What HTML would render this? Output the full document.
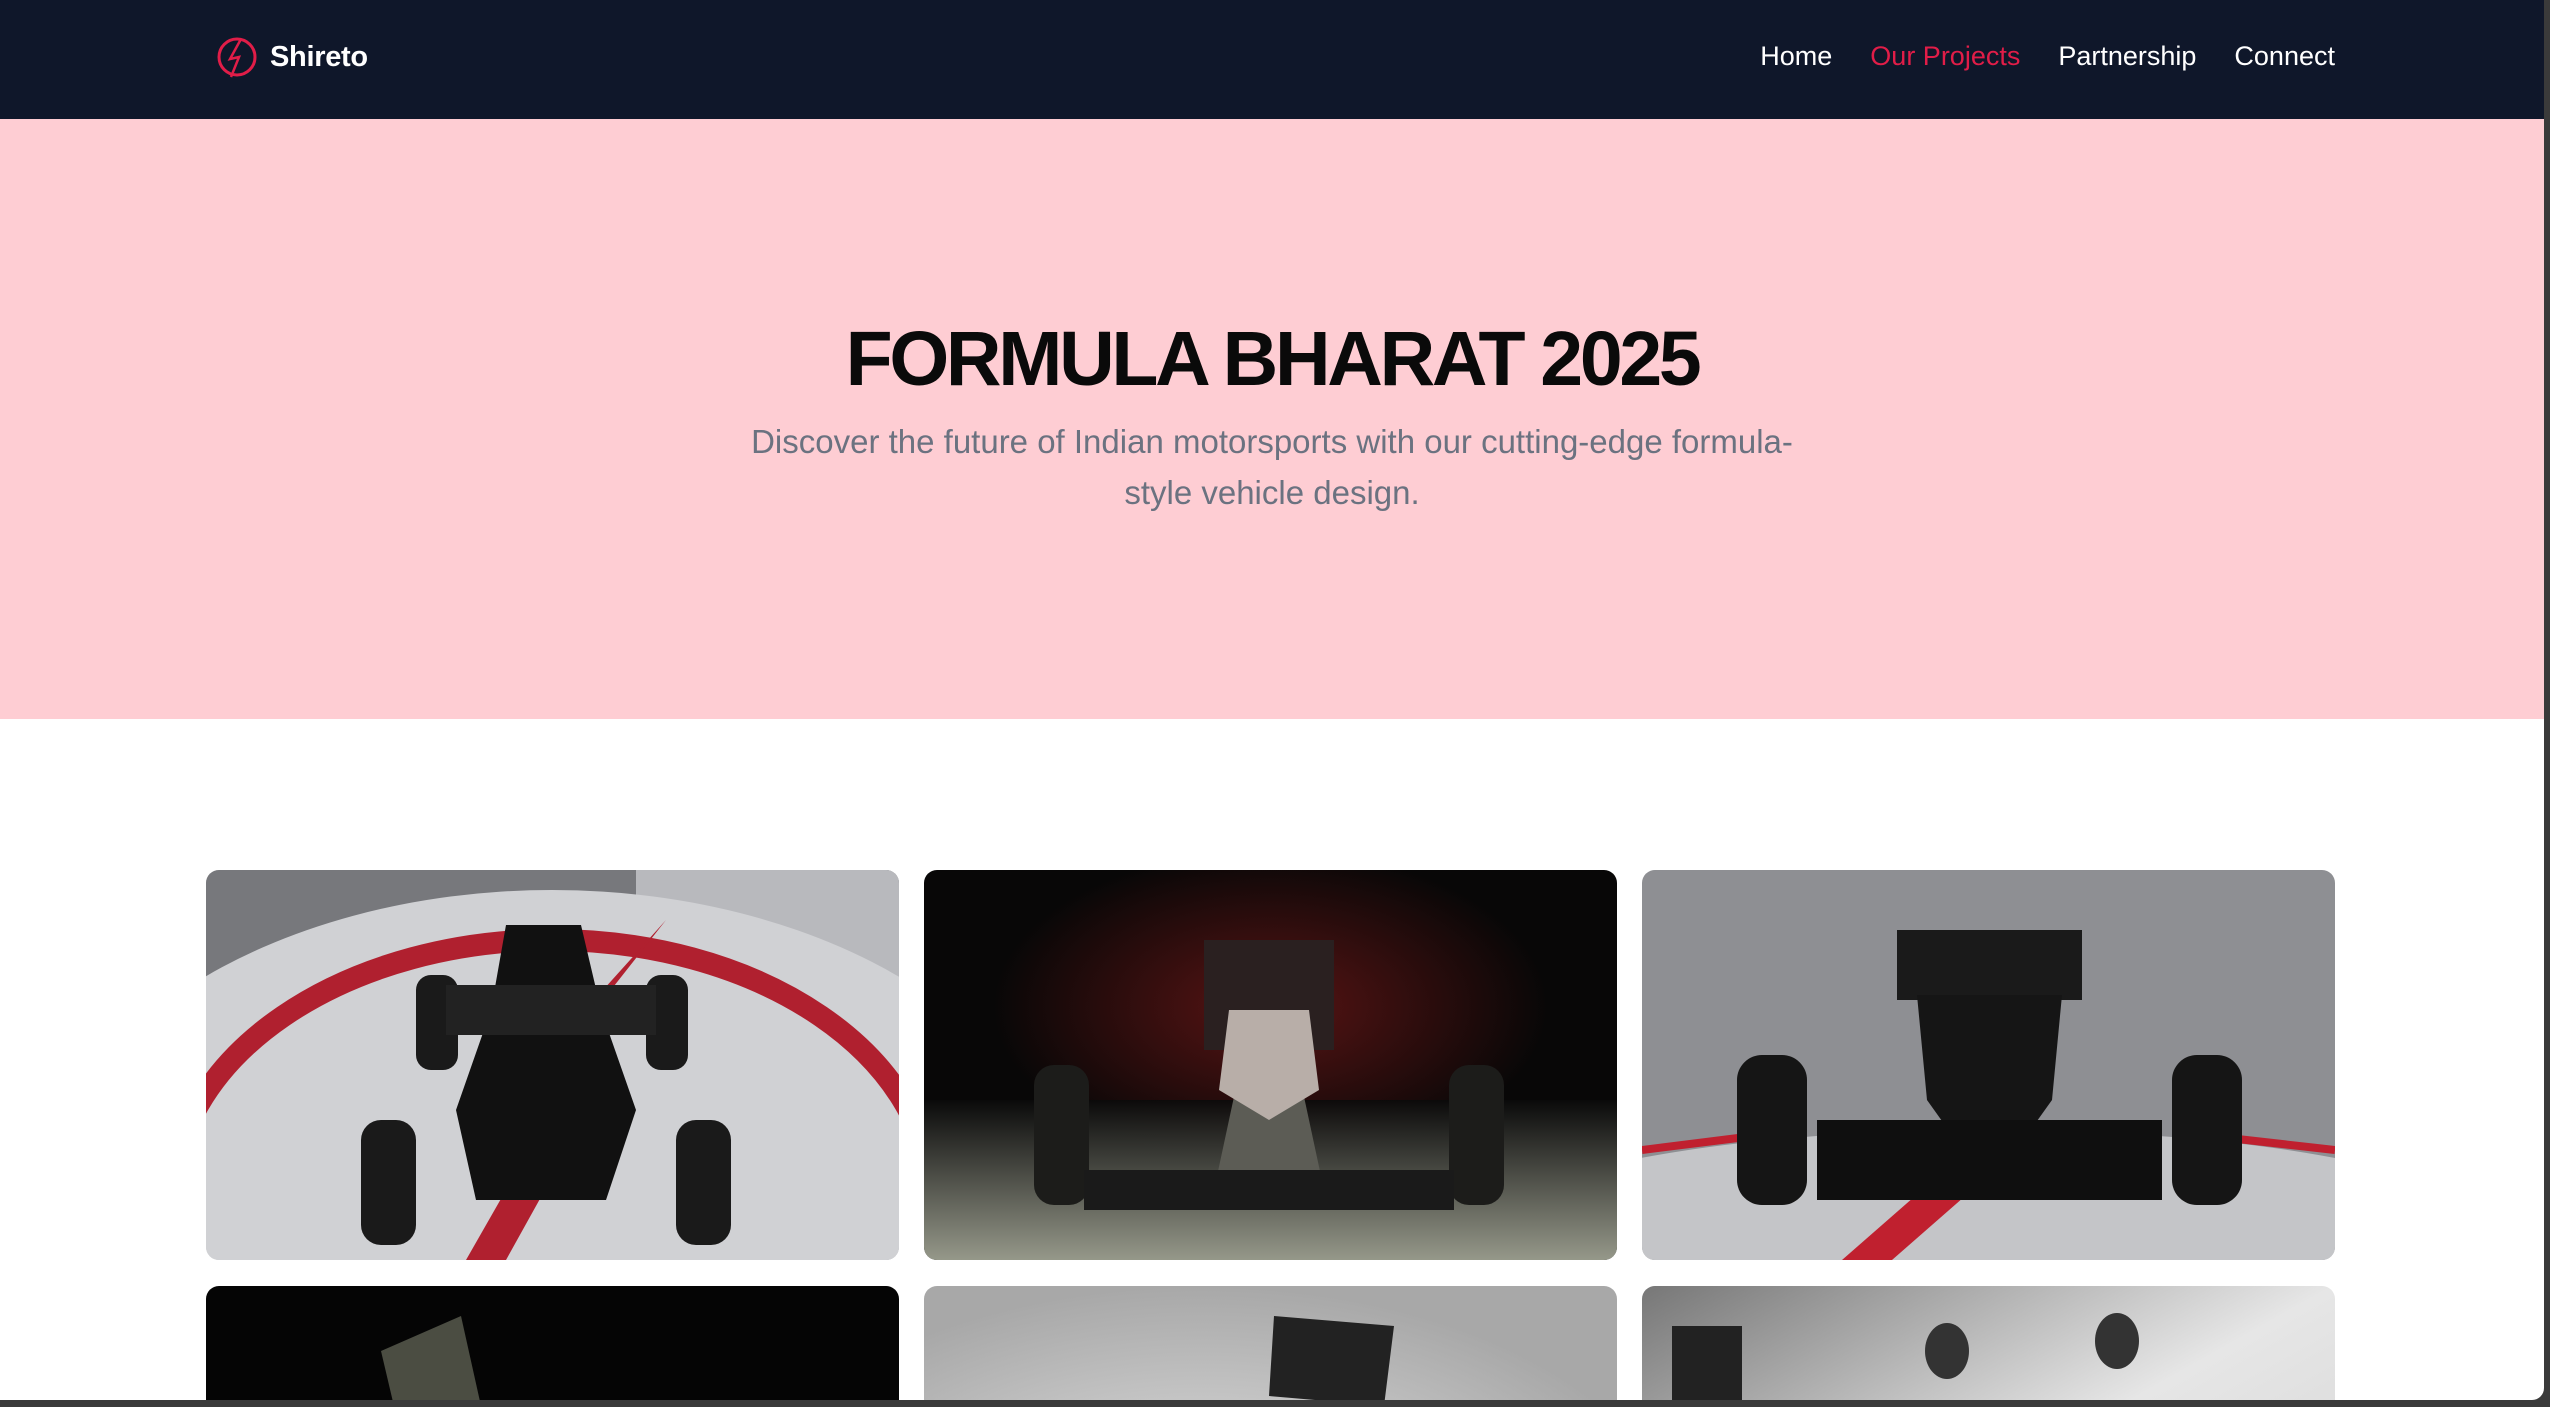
<!DOCTYPE html>
<html><head><meta charset="utf-8"><style>
*{margin:0;padding:0;box-sizing:border-box}
html,body{width:2550px;height:1407px;overflow:hidden;background:#3a3a3a}
#page{position:absolute;left:0;top:0;width:2544px;height:1400px;background:#fff;overflow:hidden;border-bottom-right-radius:12px;font-family:"Liberation Sans",sans-serif}
nav{position:absolute;left:0;top:0;width:100%;height:119px;background:#0f172a}
.logo{position:absolute;left:216px;top:35px;display:flex;align-items:center}
.logo span{color:#fff;font-weight:bold;font-size:29px;margin-left:12px;letter-spacing:-0.3px}
.links{position:absolute;right:209px;top:41px;display:flex;gap:38px;font-size:27px;color:#fff}
.links .a{color:#e11d48}
.hero{position:absolute;left:0;top:119px;width:100%;height:600px;background:#fecdd3;text-align:center}
.hero h1{position:absolute;left:0;width:2544px;top:202px;font-size:77px;font-weight:bold;color:#0a0a0a;letter-spacing:-3.3px;line-height:1}
.hero p{position:absolute;left:722px;width:1100px;top:297px;font-size:33px;line-height:51px;color:#6b7280}
.card{position:absolute;width:693px;height:390px;border-radius:13px;overflow:hidden}
.card svg{display:block;width:100%;height:100%}
</style></head><body><div id="page">
<nav>
<div class="logo"><svg width="42" height="44" viewBox="0 0 42 44"><circle cx="21" cy="22" r="18" fill="none" stroke="#e11d48" stroke-width="3"/><path d="M25 4 L14 24 L23 22 L15 42" fill="none" stroke="#e11d48" stroke-width="2.5"/></svg><span>Shireto</span></div>
<div class="links"><span>Home</span><span class="a">Our Projects</span><span>Partnership</span><span>Connect</span></div>
</nav>
<div class="hero"><h1>FORMULA BHARAT 2025</h1><p>Discover the future of Indian motorsports with our cutting-edge formula-style vehicle design.</p></div>

<div class="card" style="left:206px;top:870px"><svg viewBox="0 0 693 390" preserveAspectRatio="none">
<rect width="693" height="390" fill="#c9cacd"/><rect width="693" height="120" fill="#77787c"/><rect x="430" width="263" height="390" fill="#b8b9bd"/>
<ellipse cx="346" cy="360" rx="520" ry="340" fill="#d0d1d4"/>
<ellipse cx="346" cy="330" rx="380" ry="260" fill="none" stroke="#b0202f" stroke-width="22"/>
<path d="M460 50 L280 250 L340 250 L260 390 L300 390 L400 210 L330 215 Z" fill="#b0202f"/>
<rect x="210" y="105" width="42" height="95" rx="15" fill="#1a1a1a"/><rect x="440" y="105" width="42" height="95" rx="15" fill="#1a1a1a"/>
<rect x="155" y="250" width="55" height="125" rx="20" fill="#1a1a1a"/><rect x="470" y="250" width="55" height="125" rx="20" fill="#1a1a1a"/>
<path d="M300 55 L375 55 L395 140 L430 240 L400 330 L270 330 L250 240 L285 140 Z" fill="#111"/>
<rect x="240" y="115" width="210" height="50" fill="#222"/>
</svg></div>

<div class="card" style="left:924px;top:870px"><svg viewBox="0 0 693 390" preserveAspectRatio="none">
<defs><radialGradient id="g2" cx="50%" cy="35%" r="40%"><stop offset="0" stop-color="#5a1414"/><stop offset="1" stop-color="#080707"/></radialGradient>
<linearGradient id="f2" x1="0" y1="0" x2="0" y2="1"><stop offset="0" stop-color="#0a0a0a"/><stop offset="1" stop-color="#a5a898"/></linearGradient></defs>
<rect width="693" height="390" fill="url(#g2)"/><rect y="230" width="693" height="160" fill="url(#f2)" opacity=".9"/>
<rect x="280" y="70" width="130" height="110" fill="#2a2020"/>
<path d="M320 180 L370 180 L400 320 L290 320 Z" fill="#5c5c55"/>
<path d="M305 140 L385 140 L395 220 L345 250 L295 220 Z" fill="#b8aea8"/>
<rect x="110" y="195" width="55" height="140" rx="20" fill="#1c1c1a"/><rect x="525" y="195" width="55" height="140" rx="20" fill="#1c1c1a"/>
<rect x="160" y="300" width="370" height="40" fill="#1a1a1a"/>
</svg></div>

<div class="card" style="left:1642px;top:870px"><svg viewBox="0 0 693 390" preserveAspectRatio="none">
<rect width="693" height="390" fill="#8e8f93"/><ellipse cx="346" cy="360" rx="500" ry="100" fill="#c4c5c8"/>
<path d="M0 280 L120 265 M560 265 L693 280" stroke="#c0202f" stroke-width="8"/>
<path d="M200 390 L280 320 L330 320 L250 390 Z" fill="#c0202f"/>
<rect x="255" y="60" width="185" height="70" fill="#1a1a1a"/>
<path d="M275 125 L420 125 L410 230 L360 300 L335 300 L285 230 Z" fill="#151515"/>
<rect x="95" y="185" width="70" height="150" rx="25" fill="#151515"/><rect x="530" y="185" width="70" height="150" rx="25" fill="#151515"/>
<rect x="175" y="250" width="345" height="80" fill="#0f0f0f"/>
</svg></div>

<div class="card" style="left:206px;top:1286px"><svg viewBox="0 0 693 390" preserveAspectRatio="none">
<rect width="693" height="390" fill="#050505"/><path d="M175 65 L255 30 L275 120 L195 150 Z" fill="#4b4d42"/>
</svg></div>
<div class="card" style="left:924px;top:1286px"><svg viewBox="0 0 693 390" preserveAspectRatio="none">
<defs><radialGradient id="g5" cx="40%" cy="70%" r="70%"><stop offset="0" stop-color="#ececec"/><stop offset="1" stop-color="#a8a8a8"/></radialGradient></defs>
<rect width="693" height="390" fill="url(#g5)"/><path d="M350 30 L470 40 L460 120 L345 110 Z" fill="#222"/>
</svg></div>
<div class="card" style="left:1642px;top:1286px"><svg viewBox="0 0 693 390" preserveAspectRatio="none">
<defs><linearGradient id="g6" x1="0" y1="0" x2="1" y2="1"><stop offset="0" stop-color="#777"/><stop offset=".5" stop-color="#e6e6e6"/><stop offset="1" stop-color="#cfcfcf"/></linearGradient></defs>
<rect width="693" height="390" fill="url(#g6)"/><rect x="30" y="40" width="70" height="100" fill="#222"/>
<ellipse cx="305" cy="65" rx="22" ry="28" fill="#333"/><ellipse cx="475" cy="55" rx="22" ry="28" fill="#333"/>
</svg></div>
</div></body></html>
